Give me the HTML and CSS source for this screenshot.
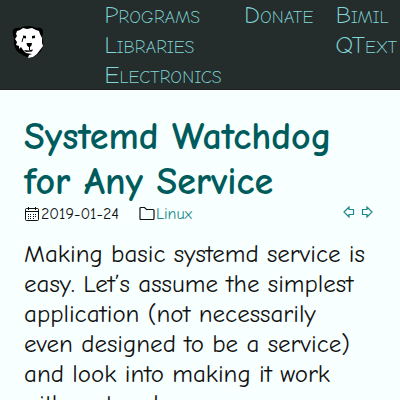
FILE: index.html
```
<!DOCTYPE html>
<html lang="en">
<head>
<meta charset="utf-8">
<meta name="viewport" content="width=device-width, initial-scale=1">
<title>Systemd Watchdog for Any Service</title>
<link rel="stylesheet" href="styles.css">
</head>
<body>
<header class="site-header">
  <a class="logo" href="#" aria-label="Home">
    <svg viewBox="0 0 32 34" aria-hidden="true">
      <path fill="#000" d="M1 5 Q3 2 8 3 Q16-1 25 3 Q31 2 31 7 Q31 10 30 12 Q33 20 29 26 Q24 32 18 33 Q10 31 5 26 Q1 21 2 13 Q0 8 1 5Z"/>
      <path fill="#fff" d="M5 6 L8 5 L11 3 L15 4 L20 3 L24 5 L27 6 L28 9 L30 13 L30 18 L31 21 L28 25 L25 29 L21 32 L16 33 L17 30 L20 29 L14 28 L11 25 L9 22 L7 24 L7 21 L4 20 L5 17 L3 14 L5 11 L4 9Z"/>
      <path fill="#000" d="M11 10.500 L14 11 L14 13.500 L11 13Z M20 11 L23 10.500 L23 13 L20 13.500Z M14.500 18 L20 18 L19.500 20.500 L18 22 L16.500 22 L15 20.500Z M12 25 L16 25.500 L21 24.500 L20 26.500 L14 27Z"/>
      <path fill="none" stroke="#000" d="M17.500 22V25M11 13L10 17"/>
    </svg>
  </a>
  <nav class="menu" aria-label="Main">
    <div class="menu-group"><a href="#">Programs</a><a href="#">Libraries</a><a href="#">Electronics</a></div>
    <div class="menu-group"><a href="#">Donate</a></div>
    <div class="menu-group"><a href="#">Bimil</a><a href="#">QText</a></div>
  </nav>
</header>
<main class="article">
  <h1>Systemd Watchdog for Any Service</h1>
  <div class="meta">
    <span class="meta-item">
      <svg class="icon" viewBox="0 0 16 16" aria-hidden="true"><path fill="none" stroke="currentColor" d="M2.5 2.5h11q1 0 1 1v10q0 1-1 1h-11q-1 0-1-1v-10q0-1 1-1zM1.500 5.500h13M4.500 1v3M11.500 1v3"/><path fill="currentColor" d="M4 8h1v1H4zM6 8h1v1H6zM9 8h1v1H9zM11 8h1v1h-1zM4 10h1v1H4zM6 10h1v1H6zM9 10h1v1H9zM11 10h1v1h-1zM4 12h1v1H4zM6 12h1v1H6zM9 12h1v1H9z"/></svg>
      <time datetime="2019-01-24">2019-01-24</time>
    </span>
    <span class="meta-item">
      <svg class="icon" viewBox="0 0 16 16" aria-hidden="true"><path fill="none" stroke="currentColor" stroke-width="1.200" d="M2 1.500h3.500l2 2h6.500q1 0 1 1v8q0 1-1 1h-12q-1 0-1-1v-10q0-1 1-1z"/></svg>
      <a href="#">Linux</a>
    </span>
    <span class="pager">
      <a href="#" aria-label="Previous"><svg viewBox="0 0 12 12" aria-hidden="true"><path d="M1 6l5-5v2.500h4.500v5H6V11z"/></svg></a>
      <a href="#" aria-label="Next"><svg viewBox="0 0 12 12" aria-hidden="true"><path d="M11 6L6 1v2.500H1.500v5H6V11z"/></svg></a>
    </span>
  </div>
  <p>Making basic systemd service is easy. Let’s assume the simplest application (not necessarily even designed to be a service) and look into making it work with systemd.</p>
</main>
</body>
</html>
```
FILE: styles.css
```
* { box-sizing: border-box; }
html { overflow: hidden; }
body {
  margin: 0;
  background: #f7ffff;
  color: #111;
  font: 25px/30px "Comic Neue", Lato, sans-serif;
}
a { color: #208888; text-decoration: none; }
svg { display: block; }

.site-header {
  display: flex;
  align-items: center;
  background: #252c2c;
  box-shadow: inset 0 -1px #202024;
}
.logo { flex: none; padding: 0 60px 6px 12px; }
.logo svg { width: 32px; height: 34px; }
.menu { display: flex; gap: 22px; }
.menu-group {
  display: flex;
  flex-direction: column;
  font-variant: small-caps;
  font-weight: 300;
}
.menu-group a { color: #80d8d8; white-space: nowrap; }

.article { padding: 25px 24px; }
h1 {
  margin: 0;
  color: #005c5c;
  font-size: 38px;
  line-height: 45px;
}
.meta {
  display: flex;
  align-items: center;
  gap: 20px;
  font-size: 16px;
  line-height: 18px;
}
.meta-item { display: flex; align-items: center; gap: 1px; }
.icon { width: 16px; height: 16px; }
.pager { display: flex; align-self: flex-start; gap: 6px; margin: 1px 3px 0 auto; }
.pager svg { width: 12px; height: 12px; }
.pager path { fill: none; stroke: currentColor; stroke-width: 1.2; }
p { margin: 16px 10px 16px 0; }
```
